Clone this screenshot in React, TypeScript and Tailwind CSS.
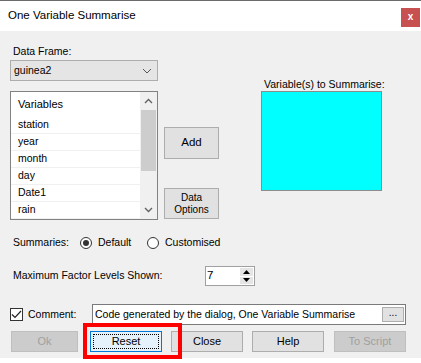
import React from "react";

const vars = ["station", "year", "month", "day", "Date1", "rain"];

function Btn({ label, disabled, focused, className = "" }: { label: string; disabled?: boolean; focused?: boolean; className?: string }) {
  const base = disabled
    ? "bg-[#cccccc] border-[#bfbfbf] text-[#a0a0a0]"
    : focused
    ? "bg-[#e5f1fb] border-[#0078d7] text-black"
    : "bg-[#e1e1e1] border-[#adadad] text-black";
  return (
    <div className={`relative flex items-center justify-center border h-[21px] ${base} ${className}`}>
      {focused && <div className="absolute inset-[2px] border border-dotted border-black" />}
      <span className="relative">{label}</span>
    </div>
  );
}

function Radio({ checked }: { checked?: boolean }) {
  return (
    <div className="w-[12px] h-[12px] rounded-full border border-[#333] bg-white flex items-center justify-center">
      {checked && <div className="w-[6px] h-[6px] rounded-full bg-[#333]" />}
    </div>
  );
}

export default function App() {
  return (
    <div className="w-[421px] h-[363px] bg-white overflow-hidden relative text-[10.5px] text-black" style={{ fontFamily: '"Liberation Sans", Arial, sans-serif' }}>
      <div className="h-px bg-[#6b6b6b]" />
      {/* title bar */}
      <div className="h-[30px] flex items-center justify-between pl-[8px] pr-[1px]">
        <span className="text-[11.5px]">One Variable Summarise</span>
        <div className="w-[19px] h-[19px] mt-[3px] bg-[#c75050] text-white font-bold text-[10px] flex items-center justify-center leading-none pb-[1px]">x</div>
      </div>

      {/* body */}
      <div className="h-[327px] bg-[#f0f0f0] flex flex-col">
        <div className="flex pl-[10px] pt-[13px]">
          {/* left column */}
          <div className="w-[148px] flex flex-col">
            <div className="h-[14px] leading-[14px] pl-[3px]">Data Frame:</div>
            <div className="mt-[2px] h-[21px] bg-[#e5e5e5] border border-[#adadad] flex items-center justify-between pl-[3px] pr-[5px]">
              <span>guinea2</span>
              <svg width="10" height="6" viewBox="0 0 10 6"><path d="M1 1 L5 5 L9 1" fill="none" stroke="#555" strokeWidth="1" /></svg>
            </div>
            <div className="mt-[10px] h-[129px] bg-white border border-[#828282] flex">
              <div className="flex-1 flex flex-col">
                <div className="h-[25px] flex items-center pl-[7px] text-[11px]">Variables</div>
                {vars.map(v => (
                  <div key={v} className="h-[17px] flex items-center pl-[7px] border-b border-[#f0f0f0]">{v}</div>
                ))}
              </div>
              <div className="w-[17px] bg-[#f0f0f0] flex flex-col items-center">
                <div className="h-[18px] flex items-center justify-center">
                  <svg width="9" height="6" viewBox="0 0 9 6"><path d="M1 5 L4.5 1.5 L8 5" fill="none" stroke="#606060" strokeWidth="1.3" /></svg>
                </div>
                <div className="w-[15px] h-[61px] bg-[#cdcdcd]" />
                <div className="flex-1" />
                <div className="h-[18px] flex items-center justify-center">
                  <svg width="9" height="6" viewBox="0 0 9 6"><path d="M1 1 L4.5 4.5 L8 1" fill="none" stroke="#606060" strokeWidth="1.3" /></svg>
                </div>
              </div>
            </div>
          </div>

          {/* middle column */}
          <div className="ml-[6px] w-[55px] flex flex-col">
            <div className="mt-[83px] h-[32px] bg-[#e1e1e1] border border-[#adadad] flex items-center justify-center text-[11.5px]">Add</div>
            <div className="mt-[29px] h-[31px] bg-[#e1e1e1] border border-[#adadad] flex flex-col items-center justify-center text-[10px] leading-[12px]">
              <span>Data</span>
              <span>Options</span>
            </div>
          </div>

          {/* right column */}
          <div className="ml-[42px] w-[121px] flex flex-col">
            <div className="mt-[33px] h-[14px] leading-[14px] pl-[3px] whitespace-nowrap">Variable(s) to Summarise:</div>
            <div className="h-[100px] bg-[#00ffff] border border-[#8c8c8c]" />
          </div>
        </div>

        {/* summaries */}
        <div className="mt-[15px] h-[16px] flex items-center pl-[13px]">
          <span className="w-[67px]">Summaries:</span>
          <Radio checked />
          <span className="ml-[6px] w-[49px]">Default</span>
          <Radio />
          <span className="ml-[6px]">Customised</span>
        </div>

        {/* max factor levels */}
        <div className="mt-[15px] h-[20px] flex items-center pl-[13px]">
          <span className="w-[192px]">Maximum Factor Levels Shown:</span>
          <div className="w-[50px] h-[20px] bg-white border border-[#a0a0a0] flex">
            <div className="flex-1 pl-[1px] text-[11.5px] leading-[17px]">7</div>
            <div className="w-[14px] flex flex-col py-[1px] pr-[1px] gap-[1px]">
              <div className="flex-1 bg-[#e5e5e5] flex items-center justify-center">
                <svg width="7" height="4" viewBox="0 0 7 4"><path d="M0 4 L3.5 0 L7 4 Z" fill="#000" /></svg>
              </div>
              <div className="flex-1 bg-[#e5e5e5] flex items-center justify-center">
                <svg width="7" height="4" viewBox="0 0 7 4"><path d="M0 0 L3.5 4 L7 0 Z" fill="#000" /></svg>
              </div>
            </div>
          </div>
        </div>

        {/* comment */}
        <div className="mt-[18px] h-[21px] flex items-center pl-[10px]">
          <div className="w-[13px] h-[13px] bg-white border border-[#333] flex items-center justify-center">
            <svg width="11" height="9" viewBox="0 0 11 9"><path d="M1 4.5 L4 7.5 L10 1" fill="none" stroke="#222" strokeWidth="1.2" /></svg>
          </div>
          <span className="ml-[5px] w-[64px]">Comment:</span>
          <div className="w-[314px] h-[21px] bg-white border border-[#7a7a7a] flex items-center justify-between pl-[2px] pr-[1px]">
            <span className="whitespace-nowrap">Code generated by the dialog, One Variable Summarise</span>
            <div className="w-[22px] h-[15px] bg-[#e1e1e1] border border-[#adadad] flex items-center justify-center text-[10px] leading-none pb-[3px]">...</div>
          </div>
        </div>

        {/* buttons */}
        <div className="mt-[6px] flex pl-[11px] text-[11px]">
          <Btn label="Ok" disabled className="w-[67px]" />
          <Btn label="Reset" focused className="ml-[12px] w-[72px]" />
          <Btn label="Close" className="ml-[9px] w-[72px]" />
          <Btn label="Help" className="ml-[9px] w-[72px]" />
          <Btn label="To Script" disabled className="ml-[10px] w-[72px]" />
        </div>
      </div>

      {/* highlight */}
      <div className="absolute left-[83px] top-[323px] w-[99px] h-[36px] border-[4px] border-[#ff0000]" />
    </div>
  );
}
